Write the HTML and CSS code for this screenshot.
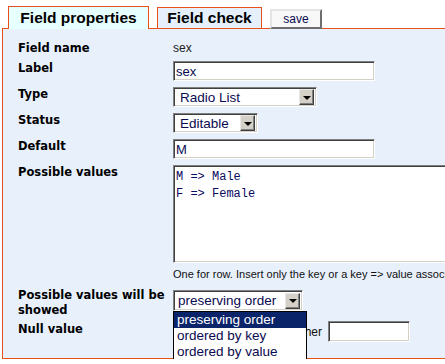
FILE: index.html
```html
<!DOCTYPE html>
<html lang="en">
<head>
    <meta charset="UTF-8">
    <meta name="viewport" content="width=device-width, initial-scale=1.0">
    <title>Field editor</title>
    <link rel="stylesheet" href="styles.css">
</head>
<body>
    <div class="page">
        <div class="tabs">
            <span class="tab active">Field properties</span>
            <span class="tab">Field check</span>
            <button class="save-button">save</button>
        </div>

        <div class="panel">
            <div class="form">
                <div class="label">Field name</div>
                <div class="value">sex</div>

                <div class="label">Label</div>
                <div><input class="text-input" type="text" value="sex"></div>

                <div class="label">Type</div>
                <div>
                    <div class="select select-type">
                        <span class="select-text">Radio List</span>
                        <span class="select-arrow"></span>
                    </div>
                </div>

                <div class="label">Status</div>
                <div>
                    <div class="select select-status">
                        <span class="select-text">Editable</span>
                        <span class="select-arrow"></span>
                    </div>
                </div>

                <div class="label">Default</div>
                <div><input class="text-input" type="text" value="M"></div>

                <div class="label">Possible values</div>
                <div>
                    <textarea class="values-area">M =&gt; Male
F =&gt; Female</textarea>
                    <div class="hint">One for row. Insert only the key or a key =&gt; value association</div>
                </div>

                <div class="label label-wrap">Possible values will be showed</div>
                <div>
                    <div class="select select-order">
                        <span class="select-text">preserving order</span>
                        <span class="select-arrow"></span>
                        <ul class="dropdown">
                            <li class="selected">preserving order</li>
                            <li>ordered by key</li>
                            <li>ordered by value</li>
                        </ul>
                    </div>
                </div>

                <div class="label label-null">Null value</div>
                <div class="null-row">
                    <span class="null-choice"></span>
                    <span>Other</span>
                    <input class="text-input small" type="text" value="">
                </div>
            </div>
        </div>
    </div>
</body>
</html>
```

FILE: styles.css
```css
* {
    margin: 0;
    padding: 0;
    box-sizing: border-box;
}

body {
    font-family: "Liberation Sans", Arial, sans-serif;
    font-size: 12px;
    color: #000;
    background: #fff;
    overflow: hidden;
}

.page {
    width: 640px;
}

/* tabs */
.tabs {
    display: flex;
    align-items: flex-end;
    gap: 8px;
    height: 28px;
    padding-left: 8px;
}

.tab {
    display: flex;
    align-items: center;
    justify-content: center;
    width: 105px;
    height: 21px;
    font-weight: bold;
    font-size: 15.5px;
    background: #e6f0fc;
    border: 1px solid #e8501a;
    border-bottom: none;
}

.tab.active {
    width: 141px;
    height: 23px;
    margin-bottom: -1px;
    background: #e6ffff;
    position: relative;
    z-index: 1;
}

.save-button {
    height: 20px;
    width: 52px;
    margin-bottom: -1px;
    font-family: "Liberation Sans", Arial, sans-serif;
    font-size: 12px;
    color: #0a0a50;
    background: #f8f8f8;
    border: 2px solid;
    border-color: #e4e4e4 #6e6e6e #6e6e6e #e4e4e4;
    position: relative;
    z-index: 1;
}

/* panel */
.panel {
    margin-left: 2px;
    border: 1px solid #e8501a;
    background: #e8f0fc;
    padding: 12px 0 16px 15px;
}

.form {
    display: grid;
    grid-template-columns: 150px 1fr;
    column-gap: 5px;
    row-gap: 6px;
    align-items: start;
}

.label {
    font-family: "DejaVu Sans", Verdana, sans-serif;
    font-weight: bold;
    font-size: 11.5px;
    line-height: 14px;
    color: #000;
}

.label-wrap {
    line-height: 15px;
    margin-top: 1px;
    margin-bottom: -3px;
}

.label-null {
    margin-top: 1px;
}

.value {
    font-size: 12px;
    line-height: 14px;
    color: #222;
}

/* inputs */
.text-input {
    display: block;
    width: 202px;
    height: 20px;
    padding: 0 2px;
    font-family: "Liberation Sans", Arial, sans-serif;
    font-size: 13px;
    color: #0a0a50;
    background: #fff;
    border: 1px solid;
    border-color: #808080 #fff #fff #808080;
    box-shadow: inset 1px 1px #404040, inset -1px -1px #d4d0c8;
    outline: none;
}

.text-input.small {
    width: 82px;
    height: 21px;
}

.select {
    position: relative;
    display: flex;
    align-items: center;
    height: 20px;
    background: #fff;
    border: 1px solid;
    border-color: #808080 #fff #fff #808080;
    box-shadow: inset 1px 1px #404040, inset -1px -1px #d4d0c8;
    padding: 2px 2px 2px 6px;
}

.select-type { width: 144px; }
.select-status { width: 85px; }
.select-order { width: 130px; height: 21px; margin-top: 3px; padding-left: 4px; }

.select-text {
    flex: 1;
    font-size: 13.5px;
    color: #0a0a50;
    white-space: nowrap;
    overflow: hidden;
}

.select-arrow {
    width: 15px;
    height: 16px;
    background: #d4d0c8;
    border: 1px solid;
    border-color: #e8e8e8 #404040 #404040 #e8e8e8;
    box-shadow: inset -1px -1px #808080;
    display: flex;
    align-items: center;
    justify-content: center;
}

.select-arrow::after {
    content: "";
    border-left: 4px solid transparent;
    border-right: 4px solid transparent;
    border-top: 4px solid #000;
    margin-top: 1px;
}

.dropdown {
    position: absolute;
    top: 20px;
    left: -1px;
    width: 134px;
    list-style: none;
    background: #fff;
    border: 1px solid #000;
    z-index: 5;
}

.dropdown li {
    height: 16px;
    line-height: 16px;
    padding-left: 3px;
    font-size: 13.5px;
    color: #0a0a50;
}

.dropdown li.selected {
    background: #0a246a;
    color: #fff;
}

.values-area {
    display: block;
    width: 300px;
    height: 98px;
    padding: 3px 2px;
    font-family: "Liberation Mono", "Courier New", monospace;
    font-size: 12px;
    line-height: 16.5px;
    color: #0a0a60;
    resize: none;
    background: #fff;
    border: 1px solid;
    border-color: #808080 #fff #fff #808080;
    box-shadow: inset 1px 1px #404040, inset -1px -1px #d4d0c8;
    outline: none;
}

.hint {
    margin-top: 4px;
    font-size: 11px;
    line-height: 14px;
    color: #111;
    white-space: nowrap;
}

.null-row {
    display: flex;
    align-items: center;
    gap: 6px;
    font-size: 12px;
    color: #111;
}

.null-choice {
    width: 113px;
    height: 20px;
}
```
